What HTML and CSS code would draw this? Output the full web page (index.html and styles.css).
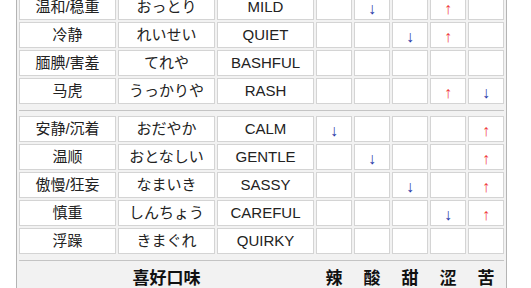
FILE: index.html
```
<!DOCTYPE html>
<html lang="zh">
<head>
<meta charset="utf-8">
<link rel="stylesheet" href="styles.css">
</head>
<body>
<table class="nature">
  <tr><td class="t">温和/稳重</td><td class="t">おっとり</td><td class="t">MILD</td><td class="s"></td><td class="s"><span class="dn">↓</span></td><td class="s"></td><td class="s"><span class="up">↑</span></td><td class="s"></td></tr>
  <tr><td class="t">冷静</td><td class="t">れいせい</td><td class="t">QUIET</td><td class="s"></td><td class="s"></td><td class="s"><span class="dn">↓</span></td><td class="s"><span class="up">↑</span></td><td class="s"></td></tr>
  <tr><td class="t">腼腆/害羞</td><td class="t">てれや</td><td class="t">BASHFUL</td><td class="s"></td><td class="s"></td><td class="s"></td><td class="s"></td><td class="s"></td></tr>
  <tr><td class="t">马虎</td><td class="t">うっかりや</td><td class="t">RASH</td><td class="s"></td><td class="s"></td><td class="s"></td><td class="s"><span class="up">↑</span></td><td class="s"><span class="dn">↓</span></td></tr>
  <tr class="sep"><td colspan="8"><div class="rule"></div></td></tr>
  <tr><td class="t">安静/沉着</td><td class="t">おだやか</td><td class="t">CALM</td><td class="s"><span class="dn">↓</span></td><td class="s"></td><td class="s"></td><td class="s"></td><td class="s"><span class="up">↑</span></td></tr>
  <tr><td class="t">温顺</td><td class="t">おとなしい</td><td class="t">GENTLE</td><td class="s"></td><td class="s"><span class="dn">↓</span></td><td class="s"></td><td class="s"></td><td class="s"><span class="up">↑</span></td></tr>
  <tr><td class="t">傲慢/狂妄</td><td class="t">なまいき</td><td class="t">SASSY</td><td class="s"></td><td class="s"></td><td class="s"><span class="dn">↓</span></td><td class="s"></td><td class="s"><span class="up">↑</span></td></tr>
  <tr><td class="t">慎重</td><td class="t">しんちょう</td><td class="t">CAREFUL</td><td class="s"></td><td class="s"></td><td class="s"></td><td class="s"><span class="dn">↓</span></td><td class="s"><span class="up">↑</span></td></tr>
  <tr><td class="t">浮躁</td><td class="t">きまぐれ</td><td class="t">QUIRKY</td><td class="s"></td><td class="s"></td><td class="s"></td><td class="s"></td><td class="s"></td></tr>
  <tr class="sep"><td colspan="8"><div class="rule"></div></td></tr>
  <tr class="head"><th colspan="3">喜好口味</th><th>辣</th><th>酸</th><th>甜</th><th>涩</th><th>苦</th></tr>
</table>
</body>
</html>
```
FILE: styles.css
```
html, body {
  margin: 0;
  padding: 0;
  background: #fff;
}
body {
  font-family: "Liberation Sans", "Noto Sans CJK SC", sans-serif;
  font-size: 15px;
  color: #222;
}
.nature {
  margin: -9px 0 0 16px;
  border-collapse: separate;
  border-spacing: 2px;
  border: 1px solid #b4b4b4;
  background: #f2f2f2;
}
.nature td.t,
.nature td.s {
  box-sizing: border-box;
  height: 26px;
  padding: 0;
  border: 1px solid #d4d4d4;
  background: #fff;
  text-align: center;
  vertical-align: middle;
  line-height: 14px;
}
.nature td.t { width: 97px; }
.nature td.s { width: 36px; }
.dn, .up {
  font-family: "Liberation Sans", sans-serif;
  font-size: 16px;
  vertical-align: -4px;
}
.dn { color: #2a3aa8; }
.up { color: #f04040; }
.sep td {
  padding: 4px 0 3px;
  border: 0;
}
.rule {
  border-top: 1px solid #c4c4c4;
}
.head th {
  height: 26px;
  padding: 0;
  font-size: 17px;
  line-height: 16px;
  font-weight: bold;
  color: #111;
  text-align: center;
  vertical-align: middle;
}
```
